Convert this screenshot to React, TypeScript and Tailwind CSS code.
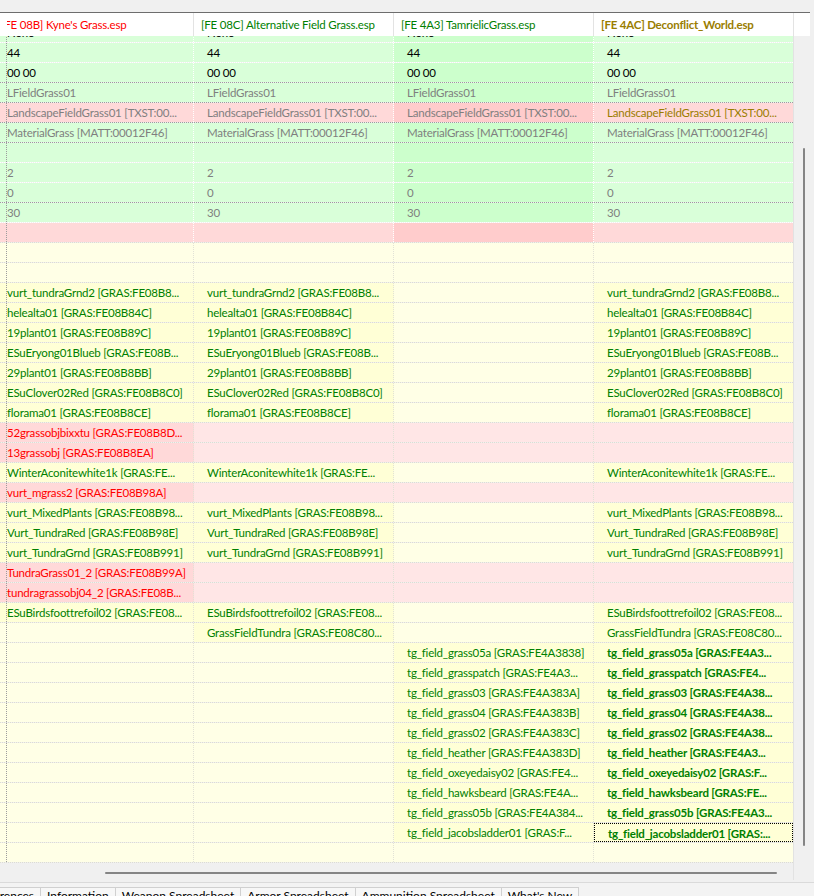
import clsx from "clsx";

type C = { t?: string; tc?: string; bg: string; bold?: boolean; focus?: boolean };
type Row = { line: string; sep: string; cells: C[] };

const GR = "bg-[#d9ffd9]";
const GR3 = "bg-[#ccffcc]";
const PK = "bg-[#ffd9d9]";
const PK3 = "bg-[#ffcccc]";
const PKL = "bg-[#ffe6e6]";
const YL = "bg-[#ffffe6]";
const YC = "bg-[#ffffd6]";

const BLK = "text-black";
const GRY = "text-[#7f7f7f]";
const GRN = "text-[#008000]";
const RED = "text-[#ff0000]";
const OLV = "text-[#9a7d00]";

const L_WHITE = "border-b-white";
const L_GRAY = "border-b-[#9c9c9c]";
const L_LIGHT = "border-b-[#dcdcd2]";
const S_WHITE = "border-r-white";
const S_LIGHT = "border-r-[#e2e2d6]";

function green(t: string, tc: string, line: string, tc4 = tc): Row {
  return {
    line,
    sep: S_WHITE,
    cells: [
      { t, tc, bg: GR },
      { t, tc, bg: GR },
      { t, tc, bg: GR3 },
      { t, tc: tc4, bg: GR },
    ],
  };
}

// cols: which of the four plugins carry the entry
function listRow(t: string, cols: number[]): Row {
  return {
    line: L_LIGHT,
    sep: S_LIGHT,
    cells: [0, 1, 2, 3].map((i) =>
      cols.includes(i) ? { t, tc: GRN, bg: YC } : { bg: YL }
    ),
  };
}

function redRow(t: string): Row {
  return {
    line: L_LIGHT,
    sep: S_LIGHT,
    cells: [{ t, tc: RED, bg: PK }, { bg: PKL }, { bg: PKL }, { bg: PKL }],
  };
}

const emptyYellow: Row = {
  line: L_LIGHT,
  sep: S_LIGHT,
  cells: [{ bg: YL }, { bg: YL }, { bg: YL }, { bg: YL }],
};

const tg: [string, string][] = [
  ["tg_field_grass05a [GRAS:FE4A3838]", "tg_field_grass05a [GRAS:FE4A3..."],
  ["tg_field_grasspatch [GRAS:FE4A3...", "tg_field_grasspatch [GRAS:FE4..."],
  ["tg_field_grass03 [GRAS:FE4A383A]", "tg_field_grass03 [GRAS:FE4A38..."],
  ["tg_field_grass04 [GRAS:FE4A383B]", "tg_field_grass04 [GRAS:FE4A38..."],
  ["tg_field_grass02 [GRAS:FE4A383C]", "tg_field_grass02 [GRAS:FE4A38..."],
  ["tg_field_heather [GRAS:FE4A383D]", "tg_field_heather [GRAS:FE4A3..."],
  ["tg_field_oxeyedaisy02 [GRAS:FE4...", "tg_field_oxeyedaisy02 [GRAS:F..."],
  ["tg_field_hawksbeard [GRAS:FE4A...", "tg_field_hawksbeard [GRAS:FE..."],
  ["tg_field_grass05b [GRAS:FE4A384...", "tg_field_grass05b [GRAS:FE4A3..."],
  ["tg_field_jacobsladder01 [GRAS:F...", "tg_field_jacobsladder01 [GRAS:..."],
];

const rows: Row[] = [
  green("None", BLK, L_WHITE),
  green("44", BLK, L_WHITE),
  green("00 00", BLK, L_GRAY),
  green("LFieldGrass01", GRY, L_GRAY),
  {
    line: L_GRAY,
    sep: S_WHITE,
    cells: [
      { t: "LandscapeFieldGrass01 [TXST:00...", tc: GRY, bg: PK },
      { t: "LandscapeFieldGrass01 [TXST:00...", tc: GRY, bg: PK },
      { t: "LandscapeFieldGrass01 [TXST:00...", tc: GRY, bg: PK3 },
      { t: "LandscapeFieldGrass01 [TXST:00...", tc: OLV, bg: PK },
    ],
  },
  green("MaterialGrass [MATT:00012F46]", GRY, L_GRAY),
  green("", GRY, L_WHITE),
  green("2", GRY, L_WHITE),
  green("0", GRY, L_GRAY),
  green("30", GRY, L_WHITE),
  {
    line: L_LIGHT,
    sep: S_WHITE,
    cells: [{ bg: PK }, { bg: PK }, { bg: PK3 }, { bg: PK }],
  },
  emptyYellow,
  emptyYellow,
  listRow("vurt_tundraGrnd2 [GRAS:FE08B8...", [0, 1, 3]),
  listRow("helealta01 [GRAS:FE08B84C]", [0, 1, 3]),
  listRow("19plant01 [GRAS:FE08B89C]", [0, 1, 3]),
  listRow("ESuEryong01Blueb [GRAS:FE08B...", [0, 1, 3]),
  listRow("29plant01 [GRAS:FE08B8BB]", [0, 1, 3]),
  listRow("ESuClover02Red [GRAS:FE08B8C0]", [0, 1, 3]),
  listRow("florama01 [GRAS:FE08B8CE]", [0, 1, 3]),
  redRow("52grassobjbixxtu [GRAS:FE08B8D..."),
  redRow("13grassobj [GRAS:FE08B8EA]"),
  listRow("WinterAconitewhite1k [GRAS:FE...", [0, 1, 3]),
  redRow("vurt_mgrass2 [GRAS:FE08B98A]"),
  listRow("vurt_MixedPlants [GRAS:FE08B98...", [0, 1, 3]),
  listRow("Vurt_TundraRed [GRAS:FE08B98E]", [0, 1, 3]),
  listRow("vurt_TundraGrnd [GRAS:FE08B991]", [0, 1, 3]),
  redRow("TundraGrass01_2 [GRAS:FE08B99A]"),
  redRow("tundragrassobj04_2 [GRAS:FE08B..."),
  listRow("ESuBirdsfoottrefoil02 [GRAS:FE08...", [0, 1, 3]),
  listRow("GrassFieldTundra [GRAS:FE08C80...", [1, 3]),
  ...tg.map(([a, b], i) => ({
    line: L_LIGHT,
    sep: S_LIGHT,
    cells: [
      { bg: YL },
      { bg: YL },
      { t: a, tc: GRN, bg: YC },
      { t: b, tc: GRN, bg: YC, bold: true, focus: i === tg.length - 1 },
    ],
  })),
  emptyYellow,
];

const headers = [
  { t: "[FE 08B] Kyne's Grass.esp", c: "text-[#ff0000]" },
  { t: "[FE 08C] Alternative Field Grass.esp", c: "text-[#008000]" },
  { t: "[FE 4A3] TamrielicGrass.esp", c: "text-[#008000]" },
  { t: "[FE 4AC] Deconflict_World.esp", c: "text-[#9a7d00] font-bold" },
];

const tabs = [
  "References",
  "Information",
  "Weapon Spreadsheet",
  "Armor Spreadsheet",
  "Ammunition Spreadsheet",
  "What's New",
];

function GridRow({ row }: { row: Row }) {
  return (
    <div className={clsx("flex h-[20px] border-b border-dotted", row.line)}>
      <div
        className={clsx(
          "w-[7px] shrink-0 border-r border-dotted border-r-[#9c9c9c]",
          row.cells[0].bg
        )}
      />
      <div className="flex-1 overflow-hidden">
        <div className="flex h-full -ml-[13px]">
          {row.cells.map((c, i) => (
            <div
              key={i}
              className={clsx(
                "w-[200px] shrink-0 h-full border-r border-dotted",
                row.sep,
                c.bg
              )}
            >
              <div
                className={clsx(
                  "h-full pl-[13px] pr-[4px] pt-[1px] overflow-hidden whitespace-nowrap leading-[18px]",
                  c.tc,
                  c.bold && "font-bold",
                  c.focus && "border border-dotted border-black pl-[12px] pt-0 leading-[17px]"
                )}
              >
                {c.t}
              </div>
            </div>
          ))}
        </div>
      </div>
    </div>
  );
}

export default function App() {
  return (
    <div className="w-[814px] h-[896px] overflow-hidden bg-[#f0f0f0] font-['Lato',sans-serif] text-[11.5px] tracking-[-0.2px] flex flex-col">
      {/* top strip */}
      <div className="h-[12px] shrink-0" />

      <div className="w-[810px] border-t border-[#6d6d6d] flex flex-col">
        {/* column headers */}
        <div className="flex h-[23px] bg-white">
          <div className="w-[7px] shrink-0" />
          <div className="w-[786px] overflow-hidden">
            <div className="flex h-full -ml-[13px]">
              {headers.map((h) => (
                <div
                  key={h.t}
                  className={clsx(
                    "w-[200px] shrink-0 pl-[7px] border-r border-[#e3e3e3] leading-[23px] whitespace-nowrap overflow-hidden",
                    h.c
                  )}
                >
                  {h.t}
                </div>
              ))}
            </div>
          </div>
          <div className="flex-1 border-l border-[#e3e3e3]" />
        </div>

        {/* body + vertical scrollbar */}
        <div className="flex h-[827px]">
          <div className="w-[793px] overflow-hidden">
            <div className="-mt-[13px]">
              {rows.map((r, i) => (
                <GridRow key={i} row={r} />
              ))}
            </div>
          </div>
          <div className="flex-1 flex flex-col pt-[112px] pb-[17px] pl-[9px] border-l border-[#e2e2e2] bg-[#f0f0f0]">
            <div className="flex-1 w-[2px] rounded-full bg-[#858585]" />
          </div>
        </div>

        {/* horizontal scrollbar */}
        <div className="flex h-[17px]">
          <div className="w-[793px] pt-[9px] pl-[105px]">
            <div className="w-[672px] h-[2px] rounded-full bg-[#858585]" />
          </div>
          <div className="flex-1 border-l border-[#e2e2e2]" />
        </div>
      </div>

      {/* page tabs */}
      <div className="border-t border-[#dadada] mt-[2px] pt-[4px] flex -ml-[30px] bg-[#f3f3f3] text-[12px] tracking-normal">
        {tabs.map((t) => (
          <div
            key={t}
            className="px-[6px] border-r border-t border-[#d0d0d0] leading-[16px] whitespace-nowrap text-black bg-[#f7f7f7]"
          >
            {t}
          </div>
        ))}
      </div>
    </div>
  );
}
